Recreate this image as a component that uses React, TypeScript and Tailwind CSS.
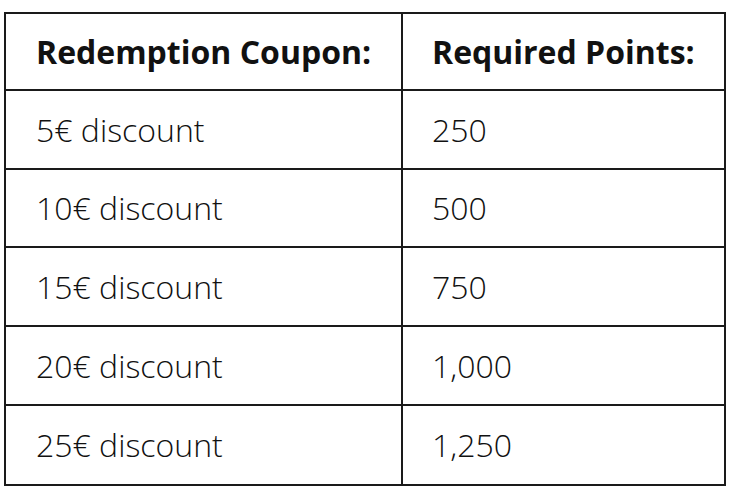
import React from "react";

const rows: [string, string][] = [
  ["5€ discount", "250"],
  ["10€ discount", "500"],
  ["15€ discount", "750"],
  ["20€ discount", "1,000"],
  ["25€ discount", "1,250"],
];

const heights = ["h-[79px]", "h-[78px]", "h-[79px]", "h-[79px]", "h-[78px]"];

export default function App() {
  return (
    <div className="w-[732px] h-[496px] bg-white pt-[12px] pl-[4px]" style={{ fontFamily: '"Open Sans", sans-serif' }}>
      <div className="w-[722px] border-2 border-[#1a1a1a] text-[#111]">
        <div className="grid grid-cols-[397px_1fr] h-[77px] border-b-2 border-[#1a1a1a]">
          <div className="border-r-2 border-[#1a1a1a] flex items-center pl-[30px] text-[32px] font-bold">
            Redemption Coupon:
          </div>
          <div className="flex items-center pl-[29px] text-[32px] font-bold">Required Points:</div>
        </div>
        {rows.map(([a, b], i) => (
          <div
            key={a}
            className={`grid grid-cols-[397px_1fr] ${heights[i]} ${i < rows.length - 1 ? "border-b-2 border-[#1a1a1a]" : ""}`}
          >
            <div className="border-r-2 border-[#1a1a1a] flex items-center pl-[30px] text-[32px] font-light">{a}</div>
            <div className="flex items-center pl-[29px] text-[32px] font-light">{b}</div>
          </div>
        ))}
      </div>
    </div>
  );
}
